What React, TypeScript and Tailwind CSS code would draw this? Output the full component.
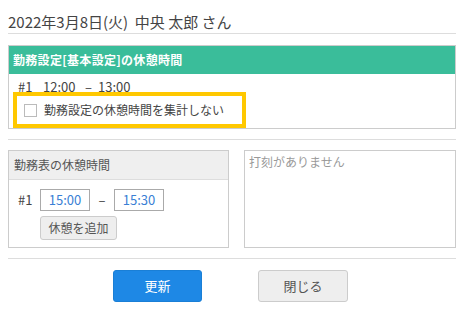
import React from "react";

export default function App() {
  const font = { fontFamily: '"Noto Sans CJK JP", "Noto Sans", sans-serif' };
  return (
    <div className="w-[464px] h-[314px] bg-white px-[8px] text-[#333]" style={font}>
      <div className="pt-[12px] pb-[1px] border-b border-[#dddddd] text-[15px] leading-[20px] text-[#444] whitespace-pre">
        2022年3月8日(火)  中央 太郎 さん
      </div>

      <div className="mt-[11px] border border-[#cccccc]">
        <div className="h-[28px] bg-[#3abd9a] pl-[4px] flex items-center text-white text-[12px] font-bold tracking-[0.3px]">
          勤務設定[基本設定]の休憩時間
        </div>
        <div className="pt-[7px] pl-[9px] flex items-center text-[13px] leading-[12px] text-[#444]">
          <span className="w-[25px]">#1</span>
          <span className="w-[42px]">12:00</span>
          <span className="w-[13px]">–</span>
          <span>13:00</span>
        </div>
        <div className="mt-[-1px] ml-[4px] w-[233px] h-[36px] border-[4px] border-[#ffc800] flex items-center pl-[7px] gap-[7px]">
          <span className="w-[13px] h-[13px] border border-[#bbbbbb] bg-white" />
          <span className="text-[12px] text-[#444]">勤務設定の休憩時間を集計しない</span>
        </div>
      </div>

      <div className="mt-[10px] border-t border-[#dddddd]" />

      <div className="mt-[10px] flex gap-[15px] h-[98px]">
        <div className="w-[221px] border border-[#cccccc] flex flex-col">
          <div className="h-[29px] bg-[#efefef] border-b border-[#dddddd] pl-[5px] flex items-center text-[12px] text-[#555]">
            勤務表の休憩時間
          </div>
          <div className="pt-[9px] pl-[9px]">
            <div className="flex items-center">
              <span className="w-[22px] text-[13px] text-[#444]">#1</span>
              <span className="w-[50px] h-[22px] border border-[#aaaaaa] flex items-center justify-center text-[13px] text-[#3a7fd5]">15:00</span>
              <span className="w-[24px] flex justify-center text-[13px] text-[#444]">–</span>
              <span className="w-[50px] h-[22px] border border-[#aaaaaa] flex items-center justify-center text-[13px] text-[#3a7fd5]">15:30</span>
            </div>
            <div className="mt-[5px] ml-[22px] w-[77px] h-[24px] rounded-[3px] border border-[#cccccc] bg-[#eeeeee] flex items-center justify-center text-[12px] text-[#555]">
              休憩を追加
            </div>
          </div>
        </div>
        <div className="flex-1 border border-[#cccccc] pt-[2px] pl-[4px] text-[12px] text-[#999999]">
          打刻がありません
        </div>
      </div>

      <div className="mt-[10px] border-t border-[#dddddd]" />

      <div className="mt-[11px] flex justify-center gap-[56px] pr-[3px]">
        <div className="w-[89px] h-[32px] rounded-[3px] bg-[#1e88e5] border border-[#1a7fd6] flex items-center justify-center text-[13px] text-white">
          更新
        </div>
        <div className="w-[90px] h-[32px] rounded-[3px] bg-[#eeeeee] border border-[#cccccc] flex items-center justify-center text-[13px] text-[#555]">
          閉じる
        </div>
      </div>
    </div>
  );
}
